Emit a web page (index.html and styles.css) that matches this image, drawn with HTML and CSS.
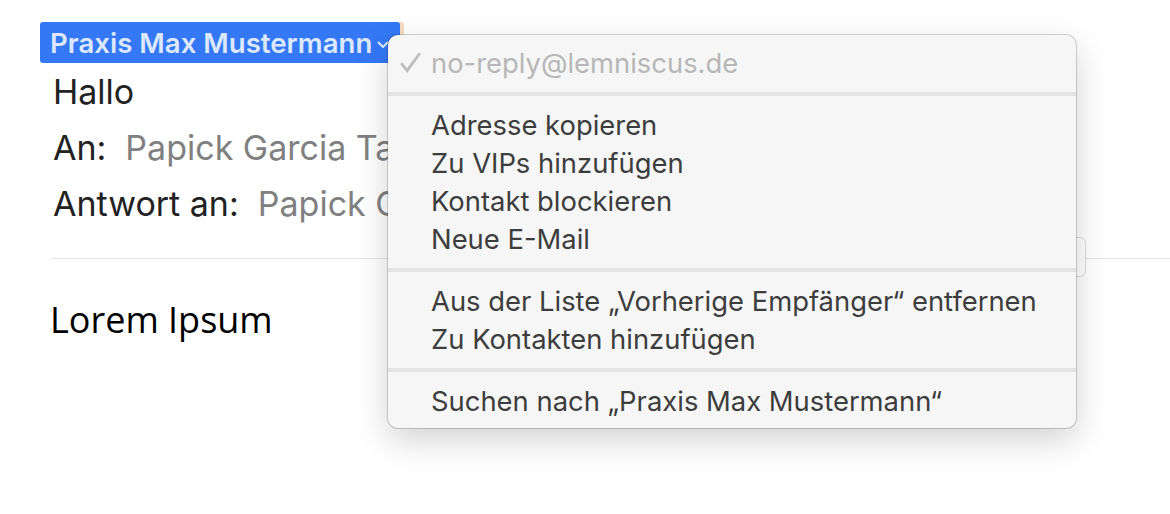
FILE: index.html
```html
<!DOCTYPE html>
<html lang="de">
<head>
    <meta charset="UTF-8">
    <title>Nachricht</title>
    <link rel="stylesheet" href="styles.css">
</head>
<body>

    <div class="mail">
        <div class="sender">
            <span class="pill">Praxis Max Mustermann
                <svg class="chevron" width="12" height="8" viewBox="0 0 12 8"><polyline points="1.5,1.5 6,6 10.5,1.5" fill="none" stroke="#dce8fd" stroke-width="2" stroke-linecap="round" stroke-linejoin="round"/></svg>
            </span>
        </div>
        <div class="line">Hallo</div>
        <div class="line"><span class="label">An:</span><span class="value">Papick Garcia Tapia</span></div>
        <div class="line"><span class="label">Antwort an:</span><span class="value">Papick Garcia Tapia</span></div>

        <div class="divider">
            <div class="rule"></div>
            <div class="toggle"></div>
            <div class="rule rule-end"></div>
        </div>

        <p class="body-text">Lorem Ipsum</p>
    </div>

    <div class="menu">
        <div class="menu-item disabled">
            <svg class="check" width="23" height="22" viewBox="0 0 23 22"><path d="M1 12 L3.2 10.3 L8 16.2 L19.8 0.6 L22 1.8 L8.3 21 Z" fill="#bdbdbd"/></svg>
            no-reply@lemniscus.de
        </div>
        <div class="sep"></div>
        <div class="menu-item">Adresse kopieren</div>
        <div class="menu-item">Zu VIPs hinzufügen</div>
        <div class="menu-item">Kontakt blockieren</div>
        <div class="menu-item">Neue E-Mail</div>
        <div class="sep"></div>
        <div class="menu-item">Aus der Liste „Vorherige Empfänger“ entfernen</div>
        <div class="menu-item">Zu Kontakten hinzufügen</div>
        <div class="sep"></div>
        <div class="menu-item">Suchen nach „Praxis Max Mustermann“</div>
    </div>

</body>
</html>
```

FILE: styles.css
```css
body {
    margin: 0;
    padding: 0;
    background-color: #ffffff;
    font-family: Inter, "Liberation Sans", sans-serif;
    overflow: hidden;
}

.mail {
    padding-top: 22px;
    padding-left: 40px;
}

.sender {
    height: 41px;
}

.pill {
    display: inline-flex;
    align-items: center;
    height: 41px;
    padding: 0 11px 0 10px;
    background-color: #3478f6;
    border-radius: 3px;
    box-shadow: 4px 0 0 #f6dcc0;
    color: #dce8fd;
    font-size: 27.6px;
    font-weight: 600;
    white-space: nowrap;
}

.chevron {
    margin-left: 5px;
    margin-top: 4px;
}

.line {
    height: 56px;
    line-height: 56px;
    padding-left: 13px;
    margin-top: 1px;
    margin-bottom: -1px;
    font-size: 34px;
    color: #222222;
    white-space: nowrap;
}

.label {
    margin-right: 19px;
}

.value {
    color: #808080;
}

.divider {
    display: flex;
    align-items: center;
    height: 40px;
    margin-top: 6px;
    margin-left: 12px;
}

.rule {
    flex: 1;
    height: 1px;
    margin-top: 2px;
    background-color: #e3e3e3;
}

.rule-end {
    flex: 0 0 84px;
}

.toggle {
    width: 40px;
    height: 40px;
    border: 1px solid #dddddd;
    border-radius: 6px;
    box-sizing: border-box;
}

.body-text {
    margin: 19px 0 0 10px;
    font-family: "Open Sans", sans-serif;
    font-size: 36px;
    line-height: 48px;
    color: #000000;
}

.menu {
    position: absolute;
    left: 388px;
    top: 35px;
    width: 688px;
    padding: 9px 0 8px;
    background-color: #f6f6f6;
    border-radius: 10px;
    box-shadow: 0 0 0 1px rgba(0, 0, 0, 0.17), 0 12px 34px rgba(0, 0, 0, 0.18);
}

.menu-item {
    position: relative;
    height: 38px;
    line-height: 38px;
    padding-left: 43px;
    font-size: 27.4px;
    color: #3d3d3d;
    white-space: nowrap;
}

.menu-item.disabled {
    color: #b7b7b7;
}

.check {
    position: absolute;
    left: 11px;
    top: 8px;
}

.sep {
    height: 4px;
    margin: 10px 0;
    background-color: #e4e4e4;
}
```
